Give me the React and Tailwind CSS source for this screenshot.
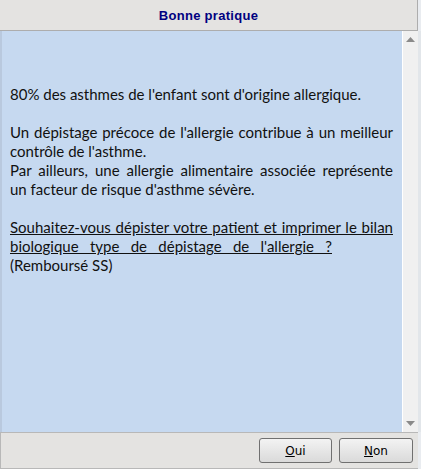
import React from 'react'

const lines = [
  { text: "80% des asthmes de l'enfant sont d'origine allergique." },
  { text: '' },
  { text: "Un dépistage précoce de l'allergie contribue à un meilleur", justify: true },
  { text: "contrôle de l'asthme." },
  { text: 'Par ailleurs, une allergie alimentaire associée représente', justify: true },
  { text: "un facteur de risque d'asthme sévère." },
  { text: '' },
]

const App = () => {
  return (
    <div className="w-[421px] h-[469px] bg-[#e9ecf0] overflow-hidden flex flex-col font-['Liberation_Sans',Arial,sans-serif]">
      <div className="h-[31px] w-[418px] shrink-0 bg-[#e4e3e1] border-b border-r border-[#adadad] flex items-center justify-center">
        <span className="text-[#000080] font-bold text-[13px] tracking-[0.3px] pt-[2px]">Bonne pratique</span>
      </div>

      <div className="flex h-[401px] shrink-0">
        <div className="w-[2px] bg-[#b9c9de]" />
        <div className="w-[400px] bg-[#c6d9f0] pl-[8px] pr-[9px] pt-[54px] text-[15px] leading-[19px] text-[#111] font-['Lato',sans-serif]">
          {lines.map((l, i) => (
            <div
              key={i}
              className={l.justify ? 'h-[19px] text-justify [text-align-last:justify]' : 'h-[19px]'}
            >
              {l.text}
            </div>
          ))}
          <div className="h-[19px] underline text-justify [text-align-last:justify]">
            Souhaitez-vous dépister votre patient et imprimer le bilan
          </div>
          <div className="h-[19px] w-[322px] underline text-justify [text-align-last:justify]">
            biologique type de dépistage de l'allergie ?
          </div>
          <div className="h-[19px]">(Remboursé SS)</div>
        </div>
        <div className="w-[16px] bg-[#f0f0f0] border-l border-white flex flex-col items-center justify-between pt-[6px] pb-[6px]">
          <svg width="9" height="5" viewBox="0 0 9 5">
            <path d="M0 5 L4.5 0 L9 5 Z" fill="#8a8a8a" />
          </svg>
          <svg width="9" height="5" viewBox="0 0 9 5">
            <path d="M0 0 L4.5 5 L9 0 Z" fill="#8a8a8a" />
          </svg>
        </div>
        <div className="w-[3px] bg-[#e2e6ea]" />
      </div>

      <div className="h-[37px] shrink-0 w-[418px] bg-[#e4e3e1] border-t border-[#b8b8b8] border-b border-l border-[#b4b4b4] flex items-center justify-end gap-[7px] pr-[5px]">
        <button className="w-[73px] h-[25px] rounded-[3px] border border-[#707070] bg-gradient-to-b from-[#f3f3f3] to-[#dadada] text-[12px] text-black font-['DejaVu_Sans',sans-serif]">
          <span className="underline">O</span>ui
        </button>
        <button className="w-[74px] h-[25px] rounded-[3px] border border-[#707070] bg-gradient-to-b from-[#f3f3f3] to-[#dadada] text-[12px] text-black font-['DejaVu_Sans',sans-serif]">
          <span className="underline">N</span>on
        </button>
      </div>
    </div>
  )
}

export default App
